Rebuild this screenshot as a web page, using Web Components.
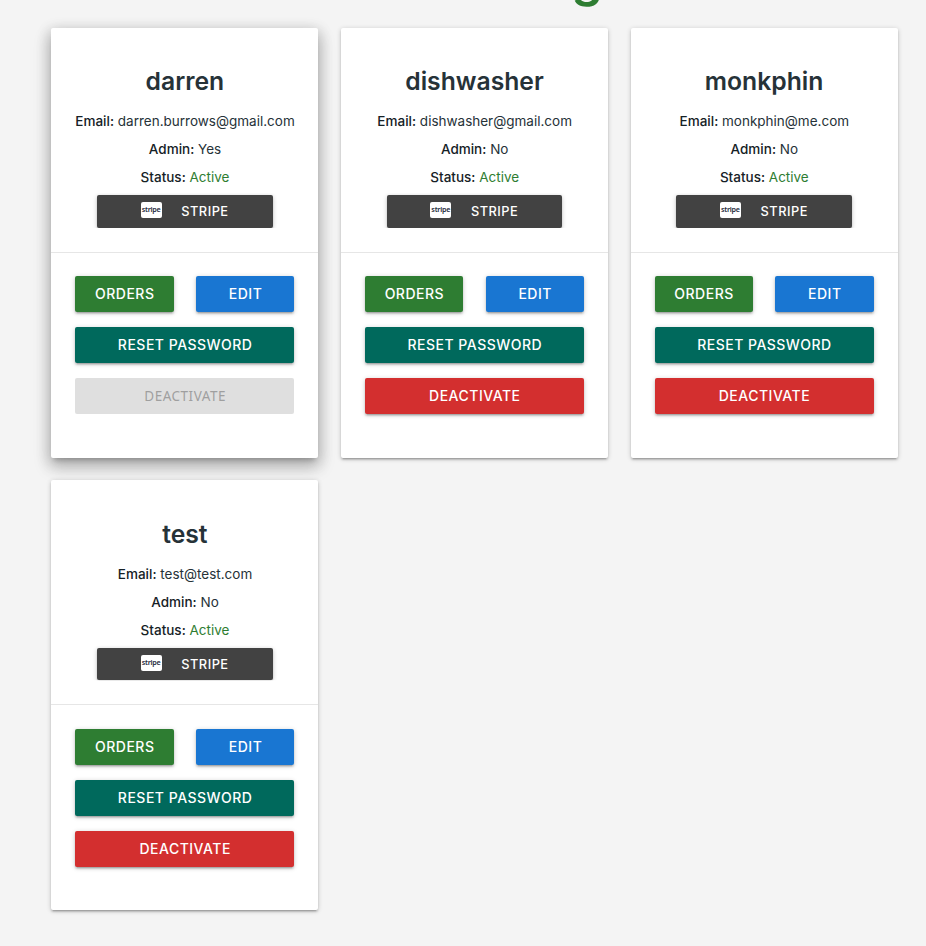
<!DOCTYPE html>
<html lang="en"><head><meta charset="utf-8"><title>Users</title>
<style>html,body{margin:0;height:946px;overflow:hidden;background:#f4f4f4}</style></head><body>
<user-page></user-page>
<script>
class UiButton extends HTMLElement{
 constructor(){super();this.attachShadow({mode:'open'}).innerHTML=`<style>
:host{display:block;min-width:0}
button{display:block;width:100%;height:36px;padding:0;border:0;border-radius:2px;background:var(--bg);color:#fff;font:500 14px/36px Inter,sans-serif;letter-spacing:.5px;text-indent:.6px;text-align:center;text-transform:uppercase;box-shadow:0 2px 2px 0 rgba(0,0,0,.14),0 3px 1px -2px rgba(0,0,0,.12),0 1px 5px 0 rgba(0,0,0,.2)}
:host([disabled]) button{background:#dfdfdf;color:#9f9f9f;box-shadow:none;font-family:"Noto Sans",sans-serif;font-weight:400;font-size:13.5px}
</style><button><slot></slot></button>`}
}
customElements.define('ui-button',UiButton);
class StripeButton extends HTMLElement{
 constructor(){super();this.attachShadow({mode:'open'}).innerHTML=`<style>
:host{display:flex;box-sizing:border-box;width:175.6px;height:32.4px;margin:0 auto;padding-left:43.6px;border-radius:2px;background:#424242;color:#fff;font:500 12.8px/33.6px Inter,sans-serif;letter-spacing:.5px;box-shadow:0 2px 2px 0 rgba(0,0,0,.14),0 3px 1px -2px rgba(0,0,0,.12),0 1px 5px 0 rgba(0,0,0,.2);clip-path:inset(-2px -5px -.4px -5px)}
.logo{width:21px;height:16px;margin:7px 19.6px 0 0;border-radius:2px;background:#fff;color:#252a3c;font:600 7.2px/15px "Noto Sans",sans-serif;letter-spacing:-.25px;text-align:center}
</style><span class="logo">stripe</span><span>STRIPE</span>`}
}
customElements.define('stripe-button',StripeButton);
class UserCard extends HTMLElement{
 connectedCallback(){
  const a=n=>this.getAttribute(n);
  this.attachShadow({mode:'open'}).innerHTML=`<style>
:host{display:flex;flex-direction:column;position:relative;height:430px;border-radius:2px;background:#fff;color:#263238;font:400 13.5px/28px Inter,sans-serif;text-align:center;box-shadow:0 2px 2px 0 rgba(0,0,0,.14),0 3px 1px -2px rgba(0,0,0,.12),0 1px 5px 0 rgba(0,0,0,.2)}
:host([raised]){box-shadow:0 8px 17px 2px rgba(0,0,0,.14),0 3px 14px 2px rgba(0,0,0,.12),0 5px 5px -3px rgba(0,0,0,.2),0 8px 17px 0 rgba(0,0,0,.1)}
.info{box-sizing:border-box;height:224px;padding-top:36.35px}
h2{margin:0 0 9px;font-size:24.7px;line-height:34px;font-weight:600;color:#263238}
p{margin:0;white-space:nowrap;text-indent:.4px}b{font-weight:500;color:#152126}.ok{color:#2e7d32}
stripe-button{margin-top:4px}
.actions{border-top:1px solid #e6e6e6;padding:23.35px 24px 0;display:grid;grid-template-columns:1fr 1fr;column-gap:22.5px;row-gap:15px}
.wide{grid-column:1/3}
</style><div class="info"><h2>${a('name')}</h2><p><b>Email:</b> ${a('email')}</p><p><b>Admin:</b> ${a('admin')}</p><p><b>Status:</b> <span class="ok">Active</span></p><stripe-button></stripe-button></div>
<div class="actions"><ui-button style="--bg:#2e7d32">Orders</ui-button><ui-button style="--bg:#1976d2">Edit</ui-button><ui-button class="wide" style="--bg:#00695c">Reset Password</ui-button><ui-button class="wide" style="--bg:#d32f2f"${this.hasAttribute('raised')?' disabled':''}>Deactivate</ui-button></div>`}
}
customElements.define('user-card',UserCard);
class UserPage extends HTMLElement{
 constructor(){super();this.attachShadow({mode:'open'}).innerHTML=`<style>
:host{display:block;overflow:hidden;height:946px}
h1{margin:0 0 0 571.5px;height:27.8px;color:#2e7d32;font:600 50px/60px Inter,sans-serif}
h1 span{display:block;margin-top:-51.8px;float:left}
main{display:grid;grid-template-columns:repeat(3,267.1px);gap:22.4px 22.55px;padding-left:51.3px}
</style><h1><span>g</span></h1><main>
<user-card raised name="darren" email="darren.burrows@gmail.com" admin="Yes"></user-card>
<user-card name="dishwasher" email="dishwasher@gmail.com" admin="No"></user-card>
<user-card name="monkphin" email="monkphin@me.com" admin="No"></user-card>
<user-card name="test" email="test@test.com" admin="No"></user-card></main>`}
}
customElements.define('user-page',UserPage);
</script></body></html>
